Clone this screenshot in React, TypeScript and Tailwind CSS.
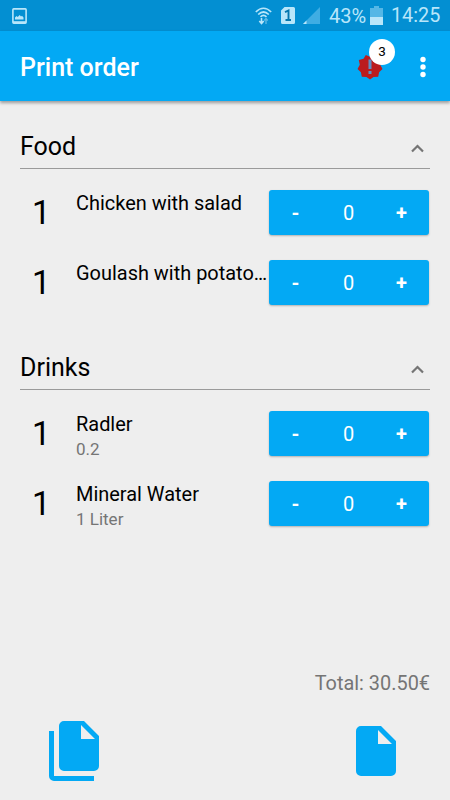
import React, { useState } from 'react';

interface OrderItem {
    name: string;
    detail?: string;
    amount: number;
}

interface OrderSection {
    title: string;
    items: OrderItem[];
}

const sections: OrderSection[] = [
    {
        title: 'Food',
        items: [
            { name: 'Chicken with salad', amount: 1 },
            { name: 'Goulash with potato…', amount: 1 },
        ],
    },
    {
        title: 'Drinks',
        items: [
            { name: 'Radler', detail: '0.2', amount: 1 },
            { name: 'Mineral Water', detail: '1 Liter', amount: 1 },
        ],
    },
];

const StatusBar: React.FC = () => (
    <div className="flex h-[31px] shrink-0 items-center bg-[#038fd2] pl-3 pr-[10px] text-[#b9e6fa]">
        <svg width="15" height="16" viewBox="0 0 15 16" fill="none">
            <rect x="0.9" y="0.9" width="13.2" height="14.2" rx="0.8" stroke="currentColor" strokeWidth="1.6" />
            <path d="M3 11.500V9.500l1.500-1.500 1.200 1 2-2 1.300 1.500 1-.8 1.500 1.800v2z" fill="currentColor" />
            <path d="M1 13.200h13v1.800H1z" fill="currentColor" />
        </svg>

        {/* Wifi with up/down arrows */}
        <svg className="ml-auto" width="17" height="18" viewBox="0 0 17 18" fill="none" stroke="currentColor">
            <path d="M.8 5Q8.500-2.500 16.200 5" strokeWidth="1.600" />
            <path d="M3.200 7.500Q8.500 2.500 13.800 7.500" strokeWidth="1.700" />
            <path d="M5.500 9.800Q8.500 7 11.500 9.800" strokeWidth="1.700" />
            <path d="M6.500 11v5.500M4.300 14l2.200 2.500 2.200-2.500" strokeWidth="1.600" />
            <path d="M11 17v-5.500M9.200 13.500l1.800-2 1.800 2" strokeWidth="1.300" opacity="0.5" />
        </svg>

        {/* SIM 1 */}
        <svg className="ml-[9px]" width="14" height="17" viewBox="0 0 14 17">
            <path d="M3.500 0h9A1.500 1.500 0 0 1 14 1.500v14a1.500 1.500 0 0 1-1.500 1.500h-11A1.500 1.500 0 0 1 0 15.500V3.500z" fill="currentColor" />
            <path d="M4 5.200l3.500-1.700v10M4.500 13h5.500" fill="none" stroke="#0577ae" strokeWidth="1.900" />
        </svg>

        <svg className="ml-2" width="17" height="17" viewBox="0 0 17 17">
            <path d="M17 0v17H0z" fill="#3fade3" />
            <path d="M3.500 13.500V17H0z" fill="currentColor" />
        </svg>

        <span className="ml-[9px] w-[36px] pt-px text-[20px] leading-none">43%</span>

        <svg className="ml-[5px]" width="13" height="19" viewBox="0 0 13 19">
            <path d="M4 0h5v2h4v17H0V2h4z" fill="#55b7e6" />
            <path d="M0 11h13v8H0z" fill="currentColor" />
        </svg>

        <span className="ml-2 w-[49px] whitespace-nowrap pt-px text-[19.800px] leading-none">14:25</span>
    </div>
);

const AppBar: React.FC<{ warnings: number }> = ({ warnings }) => (
    <div className="flex h-[70px] shrink-0 items-center bg-[#03a9f4] pl-5 pr-[19.500px] pt-[1px] shadow-[0_2px_3px_rgba(0,0,0,0.35)]">
        <h1 className="pt-[2px] text-[25px] font-medium leading-none text-white">Print order</h1>
        <div className="relative ml-auto">
            <svg width="26" height="26" viewBox="-13 -13 26 26">
                {/* Nine pointed burst */}
                <path
                    d="M-4.200-12L0-10.200 4.200-12 6.500-8.200 11.200-7 10.200-2.200 12.500 2.100 9.100 5.300 8.200 9.800 3.500 9.900 0 12.500-3.500 9.900-8.200 9.800-9.100 5.300-12.500 2.100-10.200-2.200-11.200-7-6.500-8.200z"
                    fill="#bb1b1e"
                />
                <path d="M-1.500-7.500h3v9.500h-3zM-1.500 4h3v3h-3z" fill="#5f8fc4" />
            </svg>
            <span className="absolute -top-[15px] left-[12px] flex size-[26px] items-center justify-center rounded-full bg-white pt-px text-[13.500px] leading-none text-black">
                {warnings}
            </span>
        </div>
        <button className="ml-[31.500px]">
            <svg width="16" height="22" viewBox="0 0 16 22" fill="#fff">
                <circle cx="8" cy="3.500" r="2.700" />
                <circle cx="8" cy="11" r="2.700" />
                <circle cx="8" cy="18.500" r="2.700" />
            </svg>
        </button>
    </div>
);

const ItemRow: React.FC<{ item: OrderItem }> = ({ item }) => {
    const [count, setCount] = useState(0);

    return (
        <div className="flex h-[70px]">
            <div className="w-[56px] pl-3 pt-[17px] text-[33px] leading-[35px] text-black">{item.amount}</div>
            <div className="w-[192px] pt-[13px]">
                <div className="whitespace-nowrap text-[19.950px] leading-6 text-black">{item.name}</div>
                {item.detail && <div className="pt-[2px] text-[17px] leading-[22px] text-[#757575]">{item.detail}</div>}
            </div>
            <div className="mt-3 ml-px grid h-[45px] w-[160px] grid-cols-3 items-center rounded-[3px] bg-[#03a9f4] pr-px text-center text-[20px] text-white shadow-[0_1px_2px_rgba(0,0,0,0.25)]">
                <button className="font-bold" onClick={() => setCount(c => Math.max(0, c - 1))}>-</button>
                <span>{count}</span>
                <button className="font-bold" onClick={() => setCount(c => c + 1)}>+</button>
            </div>
        </div>
    );
};

const Section: React.FC<{ section: OrderSection }> = ({ section }) => {
    const [open, setOpen] = useState(true);

    return (
        <section className="pb-[18px]">
            <button
                onClick={() => setOpen(!open)}
                className="flex h-[54px] w-full items-center justify-between border-b border-[#9a9a9a] pr-[6px] pt-[10px] text-left"
            >
                <span className="text-[25px] leading-none text-black">{section.title}</span>
                <svg className={open ? 'mt-1' : 'mt-1 rotate-180'} width="13" height="9" viewBox="0 0 13 9" fill="none">
                    <path d="M1 7.500l5.500-5.500 5.500 5.500" stroke="#757575" strokeWidth="2.200" />
                </svg>
            </button>
            <div className="pt-[9px]">
                {open && section.items.map(item => <ItemRow key={item.name} item={item} />)}
            </div>
        </section>
    );
};

export default function App() {
    return (
        <div className="flex h-[800px] w-[450px] flex-col overflow-hidden bg-[#eeeeee] font-['Roboto',sans-serif]">
            <StatusBar />
            <AppBar warnings={3} />

            <main className="flex-1 px-5 pt-[14px]">
                {sections.map(section => (
                    <Section key={section.title} section={section} />
                ))}
            </main>

            <footer className="shrink-0 px-5 pb-[19px]">
                <div className="text-right text-[19.900px] leading-6 text-[#757575]">Total: 30.50€</div>
                <div className="flex items-center justify-between pl-[29px] pr-[34px] pt-[25px]">
                    {/* Print all */}
                    <button>
                        <svg width="50" height="60" viewBox="0 0 50 60" fill="#03a9f4">
                            <path d="M0 10h5v45h40v5H5a5 5 0 0 1-5-5z" />
                            <path fillRule="evenodd" d="M15 0h20l15 15v30a5 5 0 0 1-5 5H15a5 5 0 0 1-5-5V5a5 5 0 0 1 5-5zm17 4v14h14z" />
                        </svg>
                    </button>
                    {/* Print selection */}
                    <button>
                        <svg width="40" height="50" viewBox="0 0 40 50" fill="#03a9f4">
                            <path fillRule="evenodd" d="M5 0h20l15 15v30a5 5 0 0 1-5 5H5a5 5 0 0 1-5-5V5a5 5 0 0 1 5-5zm17 4v14h14z" />
                        </svg>
                    </button>
                </div>
            </footer>
        </div>
    );
}
